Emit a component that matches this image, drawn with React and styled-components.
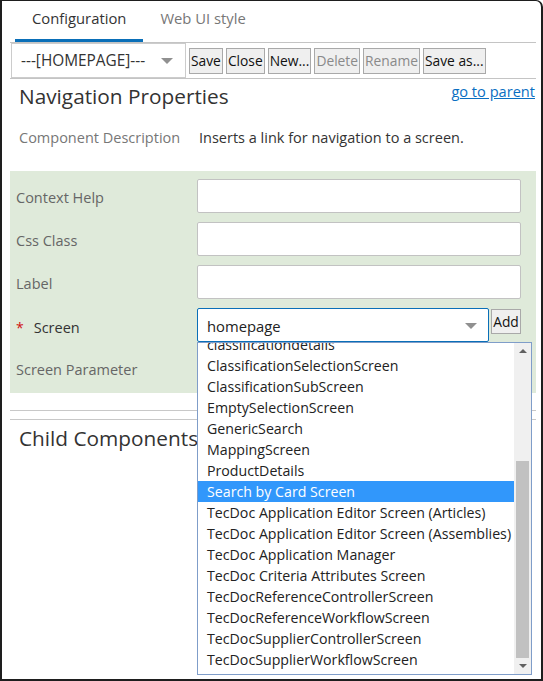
import React, { useLayoutEffect, useRef } from "react";
import styled, { createGlobalStyle } from "styled-components";

const FONT = `"Open Sans", "Noto Sans", sans-serif`;

const GlobalStyle = createGlobalStyle`
  html, body { margin: 0; padding: 0; background: #fff; }
  body { font-family: ${FONT}; color: #333; }
  * { box-sizing: border-box; }
`;

const Frame = styled.div`
  position: relative;
  width: 543px;
  height: 681px;
  border: 2px solid #1e1e1e;
  border-top-width: 1px;
  border-top-right-radius: 7px;
  background: #fff;
  overflow: hidden;
`;

const Tabs = styled.div`
  display: flex;
  height: 41px;
  padding-left: 13px;
`;

const Tab = styled.div`
  padding: 0 17px 4px;
  display: flex;
  align-items: center;
  font-size: 14.8px;
  color: ${(p) => (p.$active ? "#333" : "#777")};
  border-bottom: 3px solid ${(p) => (p.$active ? "#0a6fb8" : "transparent")};
`;

const Toolbar = styled.div`
  display: flex;
  align-items: center;
  gap: 3px;
  margin: 0 5px 0 8px;
  height: 37px;
  border-top: 1px solid #c4c4c4;
  border-bottom: 1px solid #c4c4c4;
`;

const PageSelect = styled.div`
  display: flex;
  align-items: center;
  justify-content: space-between;
  width: 175px;
  height: 35px;
  margin-left: 1px;
  padding: 0 12px 0 9px;
  border: 1px solid #ccc;
  font-size: 15.4px;
  color: #333;
`;

const Caret = styled.span`
  width: 0;
  height: 0;
  border-left: 6px solid transparent;
  border-right: 6px solid transparent;
  border-top: 6px solid #909090;
`;

const ToolButton = styled.button`
  height: 26px;
  padding: 0 1px;
  font-family: ${FONT};
  font-size: 13.8px;
  color: ${(p) => (p.disabled ? "#8a8a8a" : "#111")};
  background: #efefef;
  border: 1px solid #a9a9a9;
  border-radius: 0;
  margin: 0;
`;

const TitleRow = styled.div`
  display: flex;
  justify-content: space-between;
  align-items: flex-start;
  padding: 3px 6px 0 17px;
  height: 40px;
`;

const Title = styled.h1`
  margin: 0;
  font-size: 20.8px;
  font-weight: 400;
  color: #333;
  line-height: 28px;
`;

const ParentLink = styled.a`
  font-size: 14.6px;
  color: #0a6fc2;
  text-decoration: underline;
  line-height: 20px;
  margin-top: -1px;
`;

const DescRow = styled.div`
  display: flex;
  align-items: center;
  height: 36px;
  padding-left: 17px;
  font-size: 14.5px;
  margin-bottom: 16px;
`;

const DescLabel = styled.span`
  width: 180px;
  color: #777;
`;

const DescText = styled.span`
  color: #333;
`;

const FormPanel = styled.div`
  margin: 0 5px 0 8px;
  background: #dfeada;
  padding: 8px 15px 8px 6px;
  display: flex;
  flex-direction: column;
  gap: 9px;
`;

const FormRow = styled.div`
  display: grid;
  grid-template-columns: 181px 1fr;
  align-items: ${(p) => (p.$top ? "start" : "center")};
  height: 34px;
`;

const FieldLabel = styled.label`
  font-size: 14.5px;
  color: #666;
  display: flex;
  align-items: center;
  gap: 10px;
  padding-top: 3px;
  ${(p) => p.$top && "line-height: 34px;"}
`;

const Required = styled.span`
  color: #d01010;
  font-size: 14px;
`;

const RequiredText = styled.span`
  color: #333;
`;

const TextInput = styled.div`
  height: 34px;
  background: #fff;
  border: 1px solid #c2c2c2;
  border-radius: 2px;
`;

const SelectGroup = styled.div`
  position: relative;
  display: flex;
  align-items: flex-start;
  gap: 2px;
`;

const ScreenSelect = styled.div`
  flex: 1;
  height: 34px;
  display: flex;
  align-items: center;
  justify-content: space-between;
  padding: 1px 11px 0 9px;
  background: #fff;
  border: 1px solid #0a6fb8;
  border-radius: 2px;
  font-size: 14.8px;
  color: #222;
`;

const AddButton = styled(ToolButton)`
  width: 30px;
  height: 25px;
  margin-top: 1px;
  padding: 0;
`;

const Separator = styled.div`
  margin: 17px 5px 0 8px;
  border-top: 1px solid #c8c8c8;
`;

const ChildSection = styled.div`
  margin: 8px 5px 0 8px;
  border-top: 1px solid #c8c8c8;
  padding: 4px 0 0 9px;
`;

const ChildTitle = styled.h2`
  margin: 0;
  font-size: 20.8px;
  font-weight: 400;
  color: #333;
  line-height: 28px;
`;

const Dropdown = styled.div`
  position: absolute;
  left: 0;
  top: 34px;
  width: 335px;
  height: 333px;
  background: #fff;
  border: 1px solid #7f9dc9;
  display: flex;
  z-index: 5;
`;

const List = styled.div`
  flex: 1;
  overflow: hidden;
  height: 100%;
`;

const Option = styled.div`
  height: 21px;
  line-height: 21px;
  padding-left: 9px;
  font-size: 14.2px;
  white-space: nowrap;
  color: ${(p) => (p.$selected ? "#fff" : "#222")};
  background: ${(p) => (p.$selected ? "#3197fb" : "transparent")};
`;

const Scrollbar = styled.div`
  width: 17px;
  height: 100%;
  background: #f0f0f0;
  display: flex;
  flex-direction: column;
  align-items: center;
`;

const ArrowBox = styled.div`
  height: 17px;
  width: 17px;
  display: flex;
  align-items: center;
  justify-content: center;
`;

const Arrow = styled.span`
  width: 0;
  height: 0;
  border-left: 4px solid transparent;
  border-right: 4px solid transparent;
  ${(p) =>
    p.$up ? "border-bottom: 4px solid #606060;" : "border-top: 4px solid #606060;"}
`;

const Track = styled.div`
  flex: 1;
  width: 100%;
  padding: 0 2px;
  display: flex;
  flex-direction: column;
`;

const Thumb = styled.div`
  width: 13px;
  background: #c1c1c1;
`;

const options = [
  "classificationdetails",
  "ClassificationSelectionScreen",
  "ClassificationSubScreen",
  "EmptySelectionScreen",
  "GenericSearch",
  "MappingScreen",
  "ProductDetails",
  "Search by Card Screen",
  "TecDoc Application Editor Screen (Articles)",
  "TecDoc Application Editor Screen (Assemblies)",
  "TecDoc Application Manager",
  "TecDoc Criteria Attributes Screen",
  "TecDocReferenceControllerScreen",
  "TecDocReferenceWorkflowScreen",
  "TecDocSupplierControllerScreen",
  "TecDocSupplierWorkflowScreen",
  "UserManagement",
];

function ScreenDropdown() {
  const ref = useRef(null);
  useLayoutEffect(() => {
    if (ref.current) ref.current.scrollTop = 9;
  }, []);
  return (
    <Dropdown>
      <List ref={ref}>
        {options.map((o) => (
          <Option key={o} $selected={o === "Search by Card Screen"}>
            {o}
          </Option>
        ))}
      </List>
      <Scrollbar>
        <ArrowBox>
          <Arrow $up />
        </ArrowBox>
        <Track>
          <div style={{ height: 101 }} />
          <Thumb style={{ height: 197 }} />
        </Track>
        <ArrowBox>
          <Arrow />
        </ArrowBox>
      </Scrollbar>
    </Dropdown>
  );
}

export default function App() {
  return (
    <>
      <GlobalStyle />
      <Frame>
        <Tabs>
          <Tab $active>Configuration</Tab>
          <Tab>Web UI style</Tab>
        </Tabs>
        <Toolbar>
          <PageSelect>
            <span>---[HOMEPAGE]---</span>
            <Caret />
          </PageSelect>
          <ToolButton>Save</ToolButton>
          <ToolButton>Close</ToolButton>
          <ToolButton>New...</ToolButton>
          <ToolButton disabled>Delete</ToolButton>
          <ToolButton disabled>Rename</ToolButton>
          <ToolButton>Save as...</ToolButton>
        </Toolbar>
        <TitleRow>
          <Title>Navigation Properties</Title>
          <ParentLink href="#">go to parent</ParentLink>
        </TitleRow>
        <DescRow>
          <DescLabel>Component Description</DescLabel>
          <DescText>Inserts a link for navigation to a screen.</DescText>
        </DescRow>
        <FormPanel>
          <FormRow>
            <FieldLabel>Context Help</FieldLabel>
            <TextInput />
          </FormRow>
          <FormRow>
            <FieldLabel>Css Class</FieldLabel>
            <TextInput />
          </FormRow>
          <FormRow>
            <FieldLabel>Label</FieldLabel>
            <TextInput />
          </FormRow>
          <FormRow $top>
            <FieldLabel $top>
              <Required>*</Required>
              <RequiredText>Screen</RequiredText>
            </FieldLabel>
            <SelectGroup>
              <ScreenSelect>
                <span>homepage</span>
                <Caret />
              </ScreenSelect>
              <AddButton>Add</AddButton>
              <ScreenDropdown />
            </SelectGroup>
          </FormRow>
          <FormRow>
            <FieldLabel>Screen Parameter</FieldLabel>
            <TextInput />
          </FormRow>
        </FormPanel>
        <Separator />
        <ChildSection>
          <ChildTitle>Child Components</ChildTitle>
        </ChildSection>
      </Frame>
    </>
  );
}
